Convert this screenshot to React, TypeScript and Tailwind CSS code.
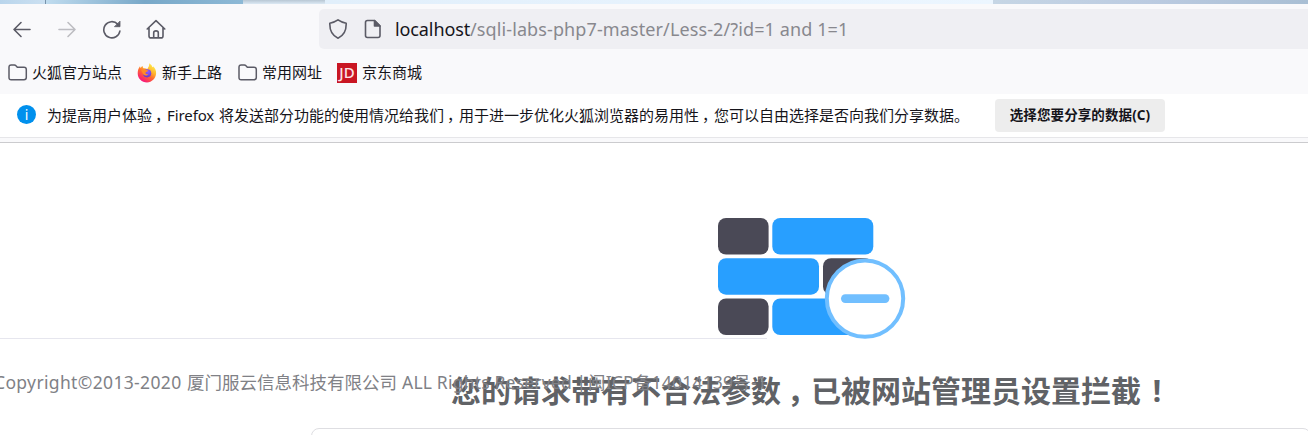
import { ReactNode } from "react";

function NavIcon({ children, className = "" }: { children: ReactNode; className?: string }) {
  return (
    <svg
      viewBox="0 0 20 20"
      className={`h-5 w-5 shrink-0 ${className}`}
      fill="none"
      stroke="currentColor"
      strokeWidth="1.6"
      strokeLinecap="round"
      strokeLinejoin="round"
    >
      {children}
    </svg>
  );
}

function FolderIcon() {
  return (
    <svg viewBox="0 0 20 18" className="h-[18px] w-5 shrink-0" fill="none" stroke="#5b5b66" strokeWidth="1.5" strokeLinejoin="round">
      <path d="M1 3.2Q1 1 3.2 1H6.3Q7.3 1 8 1.8L9.3 3.2H16Q18.3 3.2 18.3 5.4V13.6Q18.3 15.8 16 15.8H3.2Q1 15.8 1 13.6Z" />
    </svg>
  );
}

function FirefoxIcon() {
  return (
    <svg viewBox="0 0 20 20" className="h-5 w-5 shrink-0">
      <defs>
        <linearGradient id="flame" x1="0.85" y1="0.05" x2="0.25" y2="0.95">
          <stop offset="0" stopColor="#fff44f" />
          <stop offset="0.35" stopColor="#ffb52e" />
          <stop offset="0.6" stopColor="#ff6a2f" />
          <stop offset="1" stopColor="#f7127f" />
        </linearGradient>
        <radialGradient id="globe" cx="0.6" cy="0.3" r="0.8">
          <stop offset="0" stopColor="#9059ff" />
          <stop offset="1" stopColor="#5b34c9" />
        </radialGradient>
      </defs>
      <path
        fill="url(#flame)"
        d="M12.2 0.3C14 1.4 15 2.8 15.3 4.2C16 4 16 3.6 16 3.3C18.2 5.2 19.3 7.6 19.1 10.6C18.8 15.7 14.8 19.4 10 19.4C4.8 19.4 0.7 15.4 0.7 10.2C0.7 7.5 1.6 5 3 3.3C3.1 4 3.3 4.6 3.7 5C4.1 4.2 4.8 3.4 5.6 3C5.6 3.9 5.9 4.7 6.5 5.2C8 5 9.3 5.3 10.3 6C11.7 4.2 12.4 2.3 12.2 0.3Z"
      />
      <circle cx="10.1" cy="10.3" r="4.1" fill="url(#globe)" />
      <path fill="#ff8a27" d="M4.2 7.2C5.5 6 8 5.9 9.4 7.1L11.3 7.6C11 8.9 9 8.8 8.4 9.8C8.4 11 10 11.7 11.5 11C9.8 13.5 5.9 12.7 5.6 10Z" />
    </svg>
  );
}

/* Full-width punctuation placed in the middle of its cell */
function Comma() {
  return <span className="inline-block w-[1em] pl-[0.2em]">，</span>;
}

function Exclamation() {
  return <span className="inline-block w-[1em] pl-[0.06em] text-center">!</span>;
}

function Wall() {
  return (
    <svg viewBox="0 0 188 122" className="h-[122px] w-[188px] shrink-0">
      <g fill="#4a4956">
        <rect x="0" y="0" width="50.6" height="36.5" rx="8" />
        <rect x="105" y="40.2" width="50" height="36.5" rx="8" />
        <rect x="0" y="80.5" width="50.6" height="36.5" rx="8" />
      </g>
      <g fill="#289fff">
        <rect x="54.3" y="0" width="101" height="36.5" rx="8" />
        <rect x="0" y="40.2" width="101" height="36.5" rx="8" />
        <rect x="54.3" y="80.5" width="101" height="36.5" rx="8" />
      </g>
      <circle cx="147" cy="80.6" r="38.2" fill="#fff" stroke="#71bfff" strokeWidth="4" />
      <rect x="123" y="76.3" width="48.4" height="8.6" rx="4.3" fill="#71bfff" />
    </svg>
  );
}

export default function App() {
  return (
    <div className="flex h-[435px] w-[1308px] flex-col overflow-hidden bg-white font-['Noto_Sans','Noto_Sans_CJK_SC',sans-serif] whitespace-nowrap text-[#15141a]">
      <div className="flex h-1 shrink-0">
        <div className="w-[45px] bg-gradient-to-r from-[#b9d5ec] to-[#cbe0f1]" />
        <div className="w-px bg-[#7893ab]" />
        <div className="w-[197px] bg-gradient-to-r from-[#c0dcef] via-[#78a8c8] to-[#8db9d6]" />
        <div className="w-[82px] bg-gradient-to-b from-[#b8c7d4] to-[#dce9f4]" />
        <div className="w-[668px] bg-gradient-to-r from-[#e1effb] to-[#ecf6ff]" />
        <div className="flex-1 bg-gradient-to-r from-[#c6d6e5] via-[#bbcbe1] to-[#a9bfd4]" />
      </div>

      <nav className="flex h-[50px] shrink-0 items-center bg-[#f9f9fb] pl-3 text-[#5b5b66]">
        <NavIcon><path d="M18 10.5H2M9 3.5L2 10.5L9 17.5" /></NavIcon>
        <NavIcon className="ml-[25px] text-[#bdbdc2]"><path d="M2 10.5H18M11 3.5L18 10.5L11 17.5" /></NavIcon>
        <NavIcon className="ml-[25px]">
          <path d="M17.9 12A8.1 8.1 0 1 1 15.7 5.1" />
          <path d="M18 2.5V7.7H12.8Z" fill="currentColor" strokeWidth="0.8" />
        </NavIcon>
        <NavIcon className="ml-6">
          <path d="M1.2 10L10 1.7L18.8 10M3 8.5V16.9Q3 18.9 5 18.9H15Q17 18.9 17 16.9V8.5M7.7 18.5V13.7Q7.7 11.9 10 11.9Q12.3 11.9 12.3 13.7V18.5" />
        </NavIcon>
        <div className="ml-[153px] flex h-10 flex-1 items-center rounded-l-[5px] bg-[#efeff3] pl-[9px]">
          <NavIcon>
            <path d="M10 0.8Q13 3 18.2 4.2C18.4 10.5 16.3 16.5 10 19.2C3.7 16.5 1.6 10.5 1.8 4.2Q7 3 10 0.8Z" />
          </NavIcon>
          <NavIcon className="ml-[15px]">
            <path d="M4.5 1.5H11.5L17 7V16.5Q17 18.5 15 18.5H4.5Q2.5 18.5 2.5 16.5V3.5Q2.5 1.5 4.5 1.5Z" />
            <path d="M11.5 1.5V7H17Z" fill="currentColor" />
          </NavIcon>
          <div className="ml-3 text-[18px] leading-6">
            <span className="inline-block w-[75px] tracking-[-0.1px] text-[#15141a]">localhost</span>
            <span className="tracking-[0.11px] text-[#88888e]">/sqli-labs-php7-master/Less-2/?id=1 and 1=1</span>
          </div>
        </div>
      </nav>

      <div className="flex h-10 shrink-0 items-center bg-[#f9f9fb] pb-[3px] pl-2 text-[15px]">
        <FolderIcon />
        <span className="ml-1 w-[90px]">火狐官方站点</span>
        <span className="ml-[15px] flex"><FirefoxIcon /></span>
        <span className="ml-[5px] w-[60px]">新手上路</span>
        <span className="ml-4 flex"><FolderIcon /></span>
        <span className="ml-1 w-[60px]">常用网址</span>
        <span className="ml-[15px] flex h-5 w-5 items-center justify-center bg-[#c91623] text-[15px] font-medium text-[#fbe3e5]">JD</span>
        <span className="ml-[5px]">京东商城</span>
      </div>

      <div className="flex h-11 shrink-0 items-center border-b border-[#e6e6e9] pl-[17px] text-[15px]">
        <span className="mb-[3px] flex h-[19px] w-[19px] items-center justify-center rounded-full bg-[#0090ed] text-[14px] text-white">i</span>
        <span className="ml-[11px]">为提高用户体验<Comma /></span>
        <span className="w-[52px] tracking-[-0.1px]">Firefox</span>
        <span className="w-[776px]">将发送部分功能的使用情况给我们<Comma />用于进一步优化火狐浏览器的易用性<Comma />您可以自由选择是否向我们分享数据。</span>
        <button className="flex h-[33px] w-[170px] items-center justify-center rounded-[4px] bg-[#ededed] text-[13.5px] font-bold tracking-[0.1px]">
          选择您要分享的数据(C)
        </button>
      </div>
      <div className="h-1 shrink-0 bg-[#f9f9fb]" />

      <main className="grid h-[293px] shrink-0 grid-cols-[1308px] overflow-hidden border-t border-[#cbcbce] bg-white">
        <section className="col-start-1 row-start-1 ml-[311px] flex w-[1000px] flex-col items-center pt-[75px]">
          <div className="pl-0.5"><Wall /></div>
          <h1 className="mt-[28px] h-[45px] text-[30px] leading-[45px] font-bold text-[#606266]">
            您的请求带有不合法参数<Comma />已被网站管理员设置拦截<Exclamation />
          </h1>
          <div className="mt-[15px] h-10 w-full shrink-0 rounded-[8px] border border-[#dedee2]" />
        </section>
        <footer className="col-start-1 row-start-1 mt-[195px] flex h-[80px] w-[767px] items-center justify-end border-t border-[#e6e6ee] pt-[7px] text-[17.5px] text-[#808186]">
          <span className="w-[193px] shrink-0 tracking-[0.35px]">Copyright©2013-2020</span>
          <span className="w-[215px] shrink-0">厦门服云信息科技有限公司</span>
          <span className="w-[186px] shrink-0 tracking-[0.2px]">ALL Rights Reserved |</span>
          <span className="w-[179px] shrink-0 tracking-[0.2px]">闽ICP备14014139号-1</span>
        </footer>
      </main>
    </div>
  );
}
